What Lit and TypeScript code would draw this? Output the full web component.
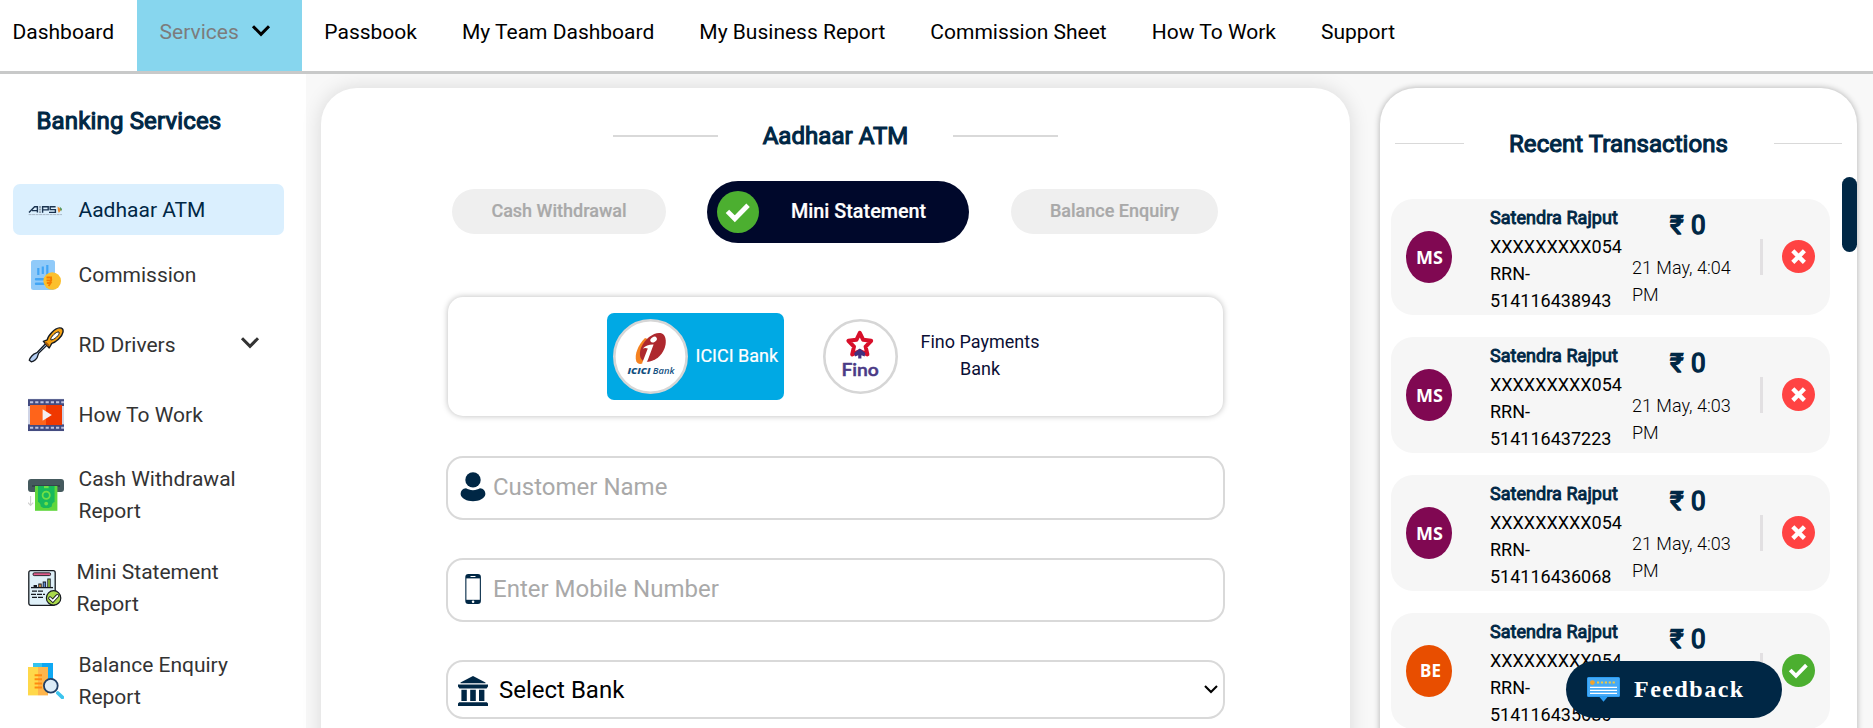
import { LitElement, html, css, nothing } from "lit";
import { customElement } from "lit/decorators.js";
import { classMap } from "lit/directives/class-map.js";

const chevron = html`<svg class="chev" width="20" height="14" viewBox="0 0 20 14"><path d="M2 2.2 10 10.4 18 2.2" fill="none" stroke="currentColor" stroke-width="3"/></svg>`;

const icons: Record<string, unknown> = {
  aeps: html`<svg width="36" height="36" viewBox="0 0 36 36">
    <g fill="none" stroke="#1b3350" stroke-width="1.4"><path d="M1 20.4 6.6 14.8H9.4V20.4M4 18.6H9"/><path d="M14.6 20.8V14.8H20.2V17.9H15"/><path d="M27.6 14.8H22.2V17.6H27.4V20.4H21"/></g>
    <path d="M12 14v7" stroke="#7d8a99" stroke-width="1.5" stroke-dasharray="2 .6"/>
    <path d="M29.6 14.4 33.4 17.6 30.8 21 29.8 18Z" fill="#e98b2a"/><path d="M31.6 14.4 34 17 33 19.4Z" fill="#3f8f4c"/>
    <path d="M.6 22.6H34" stroke="#a9b8c6" stroke-width="1" stroke-dasharray="3 .5"/></svg>`,
  commission: html`<svg width="36" height="36" viewBox="0 0 36 36">
    <rect x="3" y="3" width="24" height="30" rx="2.5" fill="#90caf9"/>
    <path d="M10.3 11v7M14.8 9.4V17M19.3 8v10" stroke="#42a5f5" stroke-width="2.2"/>
    <path d="M8 22.2h8M8 26.8h8" stroke="#42a5f5" stroke-width="2.4" stroke-linecap="round"/>
    <circle cx="24.2" cy="24" r="8.8" fill="#fbc02d"/>
    <path d="M18.5 20.5H24M18.5 23.4H23.5M18.8 26H22.6L20.6 29M22 20.3C24.4 22 23 26 20.5 26" stroke="#f57c00" stroke-width="1.8" fill="none"/></svg>`,
  driver: html`<svg width="36" height="36" viewBox="0 0 36 36">
    <path d="M18 16.2 9.4 25.2 8 26.2C5 27 2 30.5 1.3 33.2L3.4 34.8C6 34.4 9.4 31.6 9.8 28.6L10.6 26.4 19.6 17.6Z" fill="#b3cdf2" stroke="#141a22" stroke-width="1.3"/>
    <path d="M15.4 14.4 19.2 12.8C20 8.6 26.6 1.2 31.4.9 34.5.7 35.4 2.6 35 5.2 34.2 10 27.4 15.6 23.8 16.4L21.2 21Z" fill="#f6a212" stroke="#141a22" stroke-width="1.4" stroke-linejoin="round"/>
    <path d="M17.4 15.4 20.8 18.8" stroke="#a55a0b" stroke-width="2"/>
    <path d="M22.8 12.8C22 10.4 28.6 4 31 5 32.6 7.4 25.4 13.8 22.8 12.8Z" fill="#fff" stroke="#141a22" stroke-width="1"/></svg>`,
  video: html`<svg width="36" height="36" viewBox="0 0 36 36">
    <rect y="1.8" width="36" height="32.4" fill="#cfd4e6"/><rect y="2.2" width="36" height="6.8" fill="#434b80"/><rect y="27.4" width="36" height="6.6" fill="#434b80"/>
    <path d="M2 5.2H36M2 30.8H36" stroke="#bcc1de" stroke-width="2" stroke-dasharray="3.2 2"/>
    <rect x="2" y="8" width="16.5" height="20" fill="#ff641a"/><rect x="18" y="8" width="16" height="20" fill="#f03800"/>
    <path d="M14.6 12.2 23.8 18 14.6 23.8Z" fill="#f3eff2"/></svg>`,
  cash: html`<svg width="36" height="36" viewBox="0 0 36 36">
    <rect y="2" width="36" height="13" rx="3" fill="#455a5e"/><rect x="4" y="8" width="28" height="2" fill="#34464a"/>
    <rect x="7" y="9" width="22.4" height="24.8" fill="#5fd63c"/>
    <path d="M10 9H26.6V25C24.6 25.6 23.8 27 23.8 29.6L20.8 31H15.4L12.8 29.6C12.6 27 11.6 25.6 10 25Z" fill="#17b95b"/>
    <circle cx="18.2" cy="18.2" r="3.6" fill="none" stroke="#6fdf47" stroke-width="1.8"/><circle cx="18.2" cy="26.6" r="1.9" fill="#6fdf47"/><path d="M16 9H20.6V11.2H16Z" fill="#6fdf47"/>
    <path d="M2.6 19V28M0 25.6 2.6 28.4 5.2 25.6" stroke="#cfcfcf" stroke-width="1.1" fill="none"/></svg>`,
  mini: html`<svg width="34" height="36" viewBox="0 0 34 36">
    <rect x=".8" y=".7" width="26.4" height="34.6" rx="2" fill="#dff0f8" stroke="#161a20" stroke-width="1.3"/>
    <rect x="5" y="2.8" width="17.6" height="2.8" rx="1.2" fill="#e05c8b" stroke="#161a20" stroke-width=".9"/>
    <path d="M3 17.6H25" stroke="#161a20" stroke-width="1.3"/>
    <path d="M7.3 17V15M12 17v-3.6M16.4 17v-5.4M21 17V8.6" stroke="#161a20" stroke-width="3.4"/>
    <path d="M12 17v-2.6" stroke="#e0913c" stroke-width="1.7"/><path d="M16.4 17v-4.5" stroke="#5a86cc" stroke-width="1.7"/><path d="M21 17V9.4" stroke="#8dbd35" stroke-width="1.7"/>
    <path d="M4 21.2h12M3 24.4h14M4 27.4h12" stroke="#161a20" stroke-width="1.3" stroke-dasharray="5 1"/>
    <circle cx="25.6" cy="27.9" r="7.2" fill="#a9d84b" stroke="#161a20" stroke-width="1.2"/>
    <path d="M22 28.2 24.8 30.8 29.4 25.8" fill="none" stroke="#161a20" stroke-width="3.6" stroke-linecap="round"/><path d="M22 28.2 24.8 30.8 29.4 25.8" fill="none" stroke="#fff" stroke-width="1.8" stroke-linecap="round"/></svg>`,
  balance: html`<svg width="36" height="36" viewBox="0 0 36 36">
    <path d="M5 0H25V28H5Z" fill="#0fa8f3"/><path d="M5 0H14V8H5Z" fill="#34c3ee"/>
    <path d="M0 4H10V32.4H0Z" fill="#ffd84a"/><path d="M10 4H20V32.4H10Z" fill="#ffb54b"/>
    <path d="M6.6 12.2H14M6.6 16.2H14M6.6 20.4H14M6.6 24.6H14" stroke="#ff8a0f" stroke-width="2"/>
    <circle cx="22.8" cy="22.8" r="6.9" fill="#dcebf7" stroke="#213f66" stroke-width="1.8"/>
    <path d="M29.8 30 34.4 34.4" stroke="#3cc4ee" stroke-width="3.6" stroke-linecap="round"/></svg>`,
  user: html`<svg width="26" height="30" viewBox="0 0 26 30" fill="#002745"><circle cx="13" cy="7.9" r="7.7"/><path d="M6 16.2C8 17 10 18.2 13 18.2S18 17 20 16.2C23.4 16.6 25.4 18.6 25.4 22 25 26.6 19 29.2 13 29.2S1 26.6.6 22C.6 18.6 2.6 16.6 6 16.2Z"/></svg>`,
  phone: html`<svg width="26" height="30" viewBox="0 0 26 30"><rect x="5.3" y="0" width="15.6" height="30" rx="3" fill="#002745"/><rect x="6.4" y="4.4" width="13.4" height="21.4" fill="#fff"/><path d="M10.5 2.5h5" stroke="#fff" stroke-width="1"/><circle cx="13.1" cy="27.8" r="1.3" fill="#fff"/></svg>`,
  bank: html`<svg width="30" height="30" viewBox="0 0 30 30" fill="#002745"><path d="M15 0 27.5 6.4V7.2H2.5V6.4Z"/><path d="M0 8.6H30V10.5L28.6 12.4H1.4L0 10.5ZM3.4 13.8H8.8V25H3.4ZM12.2 13.8H17.8V25H12.2ZM21 13.8H26.4V25H21ZM1.2 26.3H28.8L30 27.6V30H0V27.6Z"/></svg>`,
};

const tick = (s: number) => html`<svg width=${s} height=${s} viewBox="0 0 33 33"><circle cx="16.5" cy="16.5" r="16.5" fill="#4caf30"/><path d="M8.2 16 14 21.8 24.4 11.2" fill="none" stroke="#fff" stroke-width="3.8"/></svg>`;
const cross = html`<svg width="33" height="33" viewBox="0 0 33 33"><circle cx="16.5" cy="16.5" r="16.5" fill="#ff4343"/><path d="M10.8 10.8 22.4 22.4M22.4 10.8 10.8 22.4" stroke="#fff" stroke-width="4.4"/></svg>`;

const iciciLogo = html`<svg width="75" height="75" viewBox="0 0 75 75"><circle cx="37.5" cy="37.5" r="36.2" fill="#fff" stroke="#d6d6d6" stroke-width="2.6"/>
  <path d="M32 19C25 26 21 36 23.4 42.6 24.8 45.8 29 45.8 31.6 42.8L40 22Z" fill="#f58220"/>
  <path d="M36.8 42.4C27 44.4 25.2 36 28.2 28.4 32 19 42 12.4 48.4 14.2 56.6 17 53.6 38.6 36.8 42.4Z" fill="#ae282e"/>
  <path d="M29.8 29.4C32.4 26.6 36.4 25.2 40.6 25.4L35.2 40C33.8 44.4 30.6 46 29 44.6L34.8 29.6C33 28.6 31.6 28.8 29.8 29.4Z" fill="#fff"/>
  <ellipse cx="40.6" cy="20.6" rx="3.5" ry="2.5" transform="rotate(-32 40.6 20.6)" fill="#fff"/>
  <text x="14.6" y="54.8" class="icici strong" textLength="23" lengthAdjust="spacingAndGlyphs">ICICI</text><text x="39.8" y="54.8" class="icici" textLength="21.6" lengthAdjust="spacingAndGlyphs">Bank</text></svg>`;
const finoLogo = html`<svg width="75" height="75" viewBox="0 0 75 75"><circle cx="37.5" cy="37.5" r="36.2" fill="#fff" stroke="#d6d6d6" stroke-width="2.6"/>
  <path d="M36.8 13.8 40.2 20.8 48.2 21.8 42.6 27.6 44.4 35.4 36.8 32 29.2 35.4 31 27.6 25.4 21.8 33.4 20.8Z" fill="#fff" stroke="#d80f2a" stroke-width="4" stroke-linejoin="round"/>
  <path d="M36.8 29.6 42.4 34 41.6 37.4 38.4 36.2V39.4H35.2V36.2L32 37.4 31.2 34Z" fill="#43307f"/>
  <text x="18.4" y="57" class="fino" textLength="37.4" lengthAdjust="spacingAndGlyphs">Fino</text></svg>`;

const feedbackIcon = html`<svg width="33" height="25" viewBox="0 0 33 25"><path d="M1.5 0H31.5Q33 0 33 1.5V18.4Q33 20 31.5 20H20.5L16.5 24.8 12.5 20H1.5Q0 20 0 18.4V1.5Q0 0 1.5 0Z" fill="#2b9cf2"/><path d="M1 1H32V19H1Z" fill="#45aaf7"/><circle cx="5.4" cy="5.6" r="2.4" fill="#f3a32b"/><path d="M10 5.6H29" stroke="#f0c944" stroke-width="2" stroke-dasharray="2.2 1.7"/><path d="M3 10.4H30M3 13.3H30M3 16.4H30" stroke="#fff" stroke-width="1.3"/></svg>`;

const navItems = ["Dashboard", "Services", "Passbook", "My Team Dashboard", "My Business Report", "Commission Sheet", "How To Work", "Support"];
const sideItems = [
  { icon: "aeps", label: "Aadhaar ATM", kind: "on" },
  { icon: "commission", label: "Commission", kind: "" },
  { icon: "driver", label: "RD Drivers", kind: "", more: true },
  { icon: "video", label: "How To Work", kind: "" },
  { icon: "cash", label: "Cash Withdrawal Report", kind: "tall" },
  { icon: "mini", label: "Mini Statement Report", kind: "tall" },
  { icon: "balance", label: "Balance Enquiry Report", kind: "tall" },
];
const transactions = [
  { tag: "MS", rrn: "514116438943", time: "21 May, 4:04 PM", ok: false },
  { tag: "MS", rrn: "514116437223", time: "21 May, 4:03 PM", ok: false },
  { tag: "MS", rrn: "514116436068", time: "21 May, 4:03 PM", ok: false },
  { tag: "BE", rrn: "514116435686", time: "21 May, 4:03 PM", ok: true },
];

@customElement("app-root")
export class AppRoot extends LitElement {
  static styles = css`
    :host { display: block; height: 728px; overflow: hidden; position: relative; background: #f8f8f8; font-family: Roboto, sans-serif; color: #000; }
    * { box-sizing: border-box; }
    svg { display: block; flex: none; }
    .nav { display: flex; height: 74px; background: #fff; border-bottom: 3px solid #c8c9c9; font-size: 21px; line-height: 32px; white-space: nowrap; position: relative; z-index: 1; }
    .nav-item { padding: 16px 22.5px 0; display: flex; }
    .nav-item:first-child { padding: 16px 23px 0 12.5px; }
    .nav-item.on { background: #87d6ee; color: #7c7c7c; }
    .nav-item .chev { color: #000; margin: 8px 8.6px 0 12px; }
    .body { display: flex; height: 654px; }
    .side { width: 306px; background: #fff; padding: 31px 22px 0 13px; }
    .heading { color: #002745; -webkit-text-stroke: 1.1px #002745; font-size: 24px; line-height: 32px; white-space: nowrap; font-weight: 400; margin: 0; letter-spacing: .06px; }
    .side .heading { padding-left: 23.5px; margin-bottom: 47px; letter-spacing: .15px; }
    .side-item { height: 70px; display: flex; align-items: center; gap: 14.5px; padding: 0 24px 0 15px; font-size: 21px; line-height: 32px; color: #333; }
    .side-item.on { height: 51px; margin-bottom: 5px; background: #daeffe; color: #002745; border-radius: 7px; }
    .side-item.tall { height: 93px; padding-bottom: 3px; }
    .side-item.tall span { margin-top: -1px; }
    .side-item span { flex: 1; }
    .side-item .chev { margin-top: -5px; }
    .main { width: 1029px; margin: 14px 0 0 15px; height: 700px; background: #fff; border-radius: 36px; box-shadow: 0 0 20px rgba(0,0,0,.13); padding: 32px 125px 0; flex: none; }
    .title { display: flex; justify-content: center; align-items: center; gap: 45px; height: 32px; }
    .rule { width: 105px; height: 2px; background: #d9d9d9; }
    .tabs { display: flex; align-items: center; justify-content: space-between; margin: 29px 7px 0 6px; height: 62px; font-size: 18px; font-weight: 500; white-space: nowrap; }
    .tab { height: 45px; border-radius: 23px; background: #efefef; color: #a9a9a9; display: flex; align-items: center; justify-content: center; padding-bottom: 2px; margin-top: -1px; -webkit-text-stroke: .2px currentColor; }
    .tab.a { width: 214px; } .tab.c { width: 207px; }
    .tab.b { width: 262px; height: 62px; border-radius: 31px; background: #00082b; color: #fff; justify-content: flex-start; padding: 0 0 0 10px; gap: 32px; margin: 0 0 0 -1px; font-size: 19.8px; }
    .tab.b span { padding-bottom: 1px; }
    .banks { height: 119px; margin: 54px 2px 0; border-radius: 15px; box-shadow: 0 0 6px rgba(0,0,0,.27); display: flex; align-items: center; padding: 0 0 1px 159px; font-size: 18px; line-height: 27px; color: #0b0f35; }
    .bank { display: flex; align-items: center; }
    .bank.on { width: 177px; height: 87px; background: #00a9e4; color: #fff; border-radius: 7px; padding: 0 0 0 6px; gap: 7.5px; white-space: nowrap; margin-right: 39px; }
    .bank.on span { -webkit-text-stroke: .2px #fff; margin-top: -2px; }
    .bank .name { width: 150px; text-align: center; margin: -2px 0 0 7px; }
    .icici { font: italic 600 8.8px "Open Sans", sans-serif; fill: #14507f; }
    .icici.strong { font-weight: 800; }
    .fino { font: 600 17.5px Lato, "Open Sans", sans-serif; fill: #4b3a86; stroke: #4b3a86; stroke-width: .5px; }
    .field { height: 64px; border: 2px solid #d9d9d9; border-radius: 17px; margin-top: 38px; display: flex; align-items: center; padding: 0 0 2px 12px; gap: 7px; font-size: 24px; color: #a9a9a9; }
    .banks + .field { margin-top: 40px; }
    .field.select { height: 59px; color: #000; padding-left: 10px; gap: 11px; padding-bottom: 0; }
    .field.select > svg:first-child { margin-top: 3px; }
    .field .grow { flex: 1; }
    .field .arrow { margin: 0 5px 1px 0; }
    .recent { width: 477px; height: 700px; margin: 14px 0 0 30px; background: #fff; border-radius: 36px 36px 0 0; box-shadow: 0 0 6px rgba(0,0,0,.3); flex: none; padding-top: 40px; }
    .recent .title { justify-content: space-between; padding: 0 15px; gap: 0; }
    .recent .rule { width: 68.5px; height: 1px; margin-bottom: 1px; }
    .scroll { display: flex; justify-content: space-between; margin-top: 17px; }
    .thumb { width: 15px; height: 75px; border-radius: 8px; background: #002745; }
    .list { width: 439px; margin: 22px 0 0 11px; display: flex; flex-direction: column; gap: 22px; }
    .row { height: 116px; border-radius: 22px; background: #f6f6f6; display: grid; grid-template-columns: 99px 142px 128px 22px 1fr; font-size: 18px; line-height: 27px; }
    .avatar { width: 46px; height: 52px; margin: 32px 0 0 15px; border-radius: 50%; background: #800852; color: #fff; font: 700 18px/52px "Noto Sans", sans-serif; text-align: center; padding-left: 1px; }
    .avatar.be { background: #e84e00; padding-left: 3px; font-size: 17px; }
    .who { padding-top: 5px; }
    .who b { display: block; font-weight: 400; color: #002745; -webkit-text-stroke: .9px #002745; white-space: nowrap; margin-bottom: 1.5px; letter-spacing: .05px; }
    .amt { font-size: 26px; line-height: 32px; margin: 10px 0 13px 38px; color: #002745; -webkit-text-stroke: 1.4px #002745; white-space: nowrap; word-spacing: 1px; }
    .when { font-weight: 300; width: 110px; }
    .bar { width: 3px; height: 36px; margin: 40px 0 0 0; background: #e2e0e2; }
    .mark { margin-top: 41px; }
    .feedback { position: absolute; left: 1566px; top: 661px; width: 216px; height: 57px; border-radius: 29px; background: #002745; color: #fff; display: flex; align-items: center; padding-left: 21px; gap: 14px; font: 700 24px "Liberation Serif", serif; letter-spacing: 1.5px; z-index: 2; }
  `;

  render() {
    return html`
      <nav class="nav">
        ${navItems.map((n) => html`<div class=${classMap({ "nav-item": true, on: n === "Services" })}>${n}${n === "Services" ? chevron : nothing}</div>`)}
      </nav>
      <div class="body">
        <aside class="side">
          <h2 class="heading">Banking Services</h2>
          ${sideItems.map((s) => html`<div class="side-item ${s.kind}">${icons[s.icon]}<span>${s.label}</span>${s.more ? chevron : nothing}</div>`)}
        </aside>
        <main class="main">
          <div class="title"><i class="rule"></i><h2 class="heading">Aadhaar ATM</h2><i class="rule"></i></div>
          <div class="tabs">
            <div class="tab a">Cash Withdrawal</div>
            <div class="tab b">${tick(42)}<span>Mini Statement</span></div>
            <div class="tab c">Balance Enquiry</div>
          </div>
          <div class="banks">
            <div class="bank on">${iciciLogo}<span>ICICI Bank</span></div>
            <div class="bank">${finoLogo}<div class="name">Fino Payments<br />Bank</div></div>
          </div>
          <div class="field">${icons.user}<span>Customer Name</span></div>
          <div class="field">${icons.phone}<span>Enter Mobile Number</span></div>
          <div class="field select">${icons.bank}<span class="grow">Select Bank</span>
            <svg class="arrow" width="14" height="9" viewBox="0 0 14 9"><path d="M1 1 7 7 13 1" fill="none" stroke="#000" stroke-width="2.1"/></svg></div>
        </main>
        <section class="recent">
          <div class="title"><i class="rule"></i><h2 class="heading">Recent Transactions</h2><i class="rule"></i></div>
          <div class="scroll">
            <div class="list">
              ${transactions.map((t) => html`<div class="row">
                <div class="avatar ${t.tag.toLowerCase()}">${t.tag}</div>
                <div class="who"><b>Satendra Rajput</b>XXXXXXXXX054<br />RRN-<br />${t.rrn}</div>
                <div><div class="amt">₹ 0</div><div class="when">${t.time}</div></div>
                <div class="bar"></div>
                <div class="mark">${t.ok ? tick(33) : cross}</div>
              </div>`)}
            </div>
            <div class="thumb"></div>
          </div>
        </section>
      </div>
      <div class="feedback">${feedbackIcon}Feedback</div>
    `;
  }
}
